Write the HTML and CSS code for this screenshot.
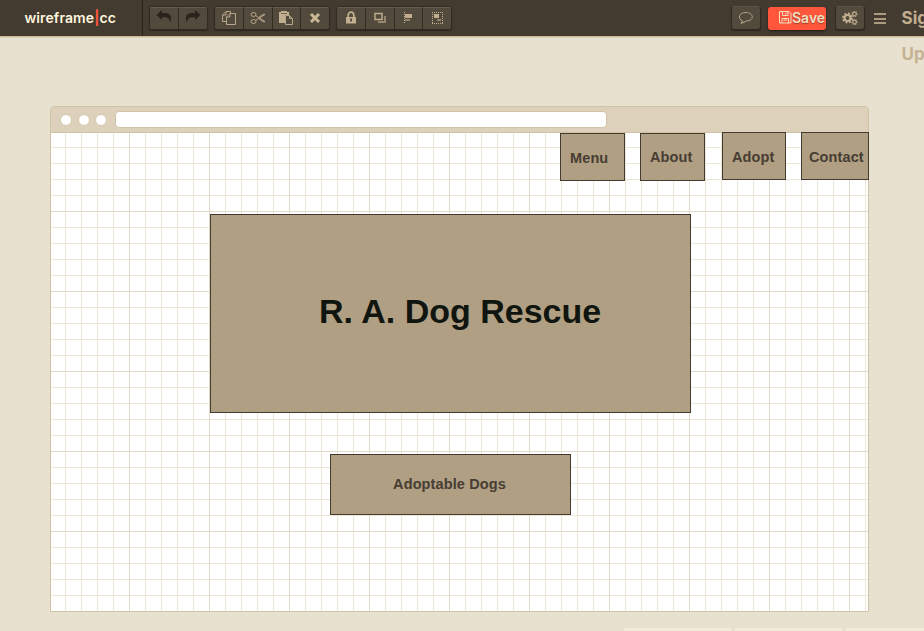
FILE: index.html
```html
<!DOCTYPE html>
<html lang="en">
<head>
<meta charset="utf-8">
<title>wireframe|cc</title>
<link rel="stylesheet" href="styles.css">
</head>
<body>
<header class="topbar">
  <div class="brand">wireframe<span class="brand-bar">|</span>cc</div>
  <div class="group history">
    <button class="btn" aria-label="Undo"><svg width="16" height="14" viewBox="0 0 16 14"><path class="dark" d="M.500 5 6 0v3h3.500c4.500 0 7 3.500 4.800 9.500C13.500 9 12 7.300 9 7.300H6V10z"/></svg></button>
    <button class="btn" aria-label="Redo"><svg width="16" height="14" viewBox="0 0 16 14"><path class="dark" d="M15.500 5 10 0v3H6.500c-4.500 0-7 3.500-4.800 9.500C2.500 9 4 7.300 7 7.300h3V10z"/></svg></button>
  </div>
  <div class="group edit">
    <button class="btn" aria-label="Copy"><svg width="16" height="16" viewBox="0 0 16 16"><path class="line" d="M5.500 11.500h-4V5L5 1.500h4.500V4M5 1.500V5H1.500M5.500 7 9 3.500h5.500v11h-9zM9 3.500V7H5.500"/></svg></button>
    <button class="btn" aria-label="Cut"><svg width="16" height="14" viewBox="0 0 16 14"><ellipse class="line" cx="3.500" cy="3.500" rx="2.500" ry="2"/><ellipse class="line" cx="3.500" cy="10.500" rx="2.500" ry="2"/><path class="line" d="m5.500 4.500 3 2L14 3l1 .500-9.500 6M8.500 7.500 14 11l1-.500-5.500-3.500"/></svg></button>
    <button class="btn" aria-label="Paste"><svg width="16" height="16" viewBox="0 0 16 16"><path class="fill" d="M1 2h2V1h6v1h2v3H7v8H1z"/><path class="dark-line" d="M3 3.500h6"/><path class="line" d="M7.500 5.500h4l3 3v6h-7zM11.500 5.500v3h3"/></svg></button>
    <button class="btn" aria-label="Delete"><svg width="12" height="12" viewBox="0 0 12 12"><path class="cross" d="m2 2 8 8m0-8-8 8"/></svg></button>
  </div>
  <div class="group arrange">
    <button class="btn" aria-label="Lock"><svg width="12" height="14" viewBox="0 0 12 14"><path class="lock" d="M3.200 7V4a2.800 2.800 0 0 1 5.600 0v3"/><path class="fill" d="M1 6h10v6.500H1z"/><path class="dark" d="M5.400 7.500h1.300v3H5.400z"/></svg></button>
    <button class="btn" aria-label="Bring forward"><svg width="12" height="12" viewBox="0 0 12 12"><path class="fill dim" d="M10 4h2v7H4V9h6z"/><path class="line strong" d="M1 1.500h7v6H1z"/></svg></button>
    <button class="btn" aria-label="Align"><svg width="10" height="12" viewBox="0 0 10 12"><path class="dots" d="M1.500 0v12"/><path class="fill" d="M2 2h7v4H2z"/><path class="fill dim" d="M2 7h5v2H2z"/></svg></button>
    <button class="btn" aria-label="Group"><svg width="12" height="12" viewBox="0 0 12 12"><path class="dots" d="M1 .500h11M1 11.500h11M1.500 0v12M11.500 0v12"/><path class="fill" d="M3 2h5v4H3z"/><path class="fill dim" d="M6 7h4v2H6z"/></svg></button>
  </div>
  <div class="actions">
    <button class="tool" aria-label="Comment"><svg width="16" height="14" viewBox="0 0 16 14"><path class="line" d="M4.500 10C-.500 7.500.500 1.500 8 1.500s9 8 .500 8.500L3 12.500z"/></svg></button>
    <button class="save"><svg width="13" height="13" viewBox="0 0 13 13"><path d="M.500.500h9.500l2 2v9.500H.500zM3.500.500v4h5.500v-4M3 12V7.500h6.500V12M7 1.500v2M4.500 9h3.500"/></svg><span>Save</span></button>
    <button class="tool" aria-label="Settings"><svg width="16" height="14" viewBox="0 0 16 14"><circle class="gear-teeth" cx="5.500" cy="7" r="4.500"/><circle class="gear" cx="5.500" cy="7" r="3"/><circle class="small-teeth" cx="12.500" cy="3" r="2.400"/><circle class="small-gear" cx="12.500" cy="3" r="1.800"/><circle class="small-teeth" cx="12.500" cy="11" r="2.400"/><circle class="small-gear" cx="12.500" cy="11" r="1.800"/></svg></button>
    <div class="burger"><i></i><i></i><i></i></div>
    <a class="signup"><span>Sign</span><span class="up">Up</span></a>
  </div>
</header>
<main class="browser">
  <div class="chrome"><i></i><i></i><i></i><div class="address"></div></div>
  <div class="canvas">
    <div class="box menu">Menu</div>
    <div class="box about">About</div>
    <div class="box adopt">Adopt</div>
    <div class="box contact">Contact</div>
    <div class="box hero">R. A. Dog Rescue</div>
    <div class="box dogs">Adoptable Dogs</div>
  </div>
</main>
<footer class="tabs"><i></i><i></i><i></i></footer>
</body>
</html>
```
FILE: styles.css
```css
* { box-sizing: border-box; }
body {
  margin: 0;
  width: 924px;
  height: 631px;
  overflow: hidden;
  display: flex;
  flex-direction: column;
  background: #e9e1cf;
  font-family: Inter, "Liberation Sans", sans-serif;
}
button { margin: 0; padding: 0; border: 0; font: inherit; }
svg { display: block; overflow: visible; }
.topbar {
  display: flex;
  align-items: flex-start;
  flex: none;
  height: 37px;
  background: #433a30;
  border-bottom: 1px solid #c9b99b;
  box-shadow: 0 1px 0 #ded2b8;
}
.brand {
  flex: none;
  width: 143px;
  height: 36px;
  padding-left: 24.500px;
  border-right: 1px solid #29231c;
  color: #fff5df;
  font-size: 14px;
  font-weight: 600;
  letter-spacing: .1px;
  line-height: 36px;
  white-space: nowrap;
}
.brand-bar { color: #ff563c; font-weight: 700; }
.group {
  display: flex;
  flex: none;
  height: 24px;
  margin-top: 6px;
  border: 1px solid #302a22;
  border-radius: 3px;
  background: #524a3c;
  box-shadow: 0 1px 1px #2e271f;
  overflow: hidden;
}
.history { width: 59px; margin-left: 6px; }
.edit { width: 116px; margin-left: 6px; }
.arrange { width: 116px; margin-left: 6px; }
.btn {
  flex: 1;
  display: flex;
  align-items: center;
  justify-content: center;
  padding-bottom: 2px;
  background: #524a3c;
  border-top: 1px solid #675e4e;
}
.history .btn { padding-bottom: 3px; }
.btn + .btn { border-left: 1px solid #302a22; }
.fill { fill: #c1af90; }
.dim { fill: #94866c; }
.line { fill: none; stroke: #b7a588; stroke-width: 1; }
.strong { stroke: #c1af90; stroke-width: 1.400; }
.dark { fill: #29231c; }
.dark-line { stroke: #74684f; }
.cross { stroke: #cbb996; stroke-width: 3; }
.lock { fill: none; stroke: #c1af90; stroke-width: 1.700; }
.dots { fill: none; stroke: #c1af90; stroke-dasharray: 1 1; }
.actions { display: flex; flex: none; margin-left: auto; width: 193px; height: 36px; }
.tool {
  display: flex;
  flex: none;
  align-items: center;
  justify-content: center;
  width: 30px;
  height: 24px;
  margin-top: 6px;
  padding-bottom: 1px;
  border: 1px solid #302a22;
  border-top-color: #5b5244;
  border-radius: 3px;
  background: #524a3c;
  box-shadow: 0 1px 1px #2e271f;
}
.save {
  display: flex;
  flex: none;
  align-items: center;
  width: 58px;
  height: 23px;
  margin: 7px 9px 0 7px;
  padding: 0 0 2px 11px;
  border-radius: 3px;
  background: #ff563c;
  box-shadow: 0 1px 2px #211a14;
  color: #f2dfc1;
  font-size: 14px;
  font-weight: 600;
  text-shadow: 0 1px 1px #a33c29;
}
.save svg { flex: none; fill: none; stroke: #f2dfc1; }
.gear { fill: none; stroke: #c1af90; stroke-width: 2.200; }
.gear-teeth { fill: none; stroke: #c1af90; stroke-width: 2; stroke-dasharray: 1.800 1.734; }
.small-gear { fill: none; stroke: #b7a588; stroke-width: 1.200; }
.small-teeth { fill: none; stroke: #b7a588; stroke-width: 1.400; stroke-dasharray: 1 .885; }
.burger { display: flex; flex: none; flex-direction: column; gap: 2.500px; width: 12px; margin: 13px 0 0 9px; }
.burger i { height: 2px; background: #ab9b7e; }
.signup { display: flex; flex: none; flex-direction: column; margin-left: 15.500px; color: #c1af90; font-size: 17px; font-weight: 700; line-height: 36px; }
.signup .up { color: #c4b393; }
.browser {
  flex: none;
  width: 819px;
  height: 506px;
  margin: 69px 0 0 50px;
  border: 1px solid #cfc3a5;
  border-radius: 4px 4px 0 0;
}
.chrome {
  display: flex;
  align-items: center;
  height: 26px;
  padding-left: 9px;
  border-bottom: 1px solid #cfc3a5;
  background: #ddd1bb;
  border-radius: 3px 3px 0 0;
}
.chrome i { width: 12px; height: 12px; margin-right: 5.700px; border: 1px solid #d3c7ab; border-radius: 50%; background: #fff; }
.address { width: 492px; height: 17px; margin-left: 2px; border: 1px solid #d0c4a8; border-radius: 4px; background: #fff; }
.canvas {
  position: relative;
  height: 478px;
  background-color: #fff;
  background-image:
    linear-gradient(90deg, #dfdac9 1px, transparent 1px),
    linear-gradient(#dfdac9 1px, transparent 1px),
    linear-gradient(90deg, #ede7d8 1px, transparent 1px),
    linear-gradient(#ede7d8 1px, transparent 1px);
  background-size: 80px 80px, 80px 80px, 16px 16px, 16px 16px;
  background-position: 78px 0, 0 78px, 14px 0, 0 14px;
}
/* Elements placed freely on the drawing canvas. */
.box {
  position: absolute;
  border: 1px solid #433a30;
  background: #b09f82;
  color: #473d33;
  font: bold 14.500px/46px "Liberation Sans", sans-serif;
  letter-spacing: .12px;
  white-space: nowrap;
}
.menu { left: 509px; top: 0; width: 65px; height: 48px; padding-left: 9px; line-height: 48px; }
.about { left: 589px; top: 0; width: 65px; height: 48px; padding-left: 9px; }
.adopt { left: 671px; top: -1px; width: 64px; height: 48px; padding-left: 9px; line-height: 48px; }
.contact { left: 750px; top: -1px; width: 68px; height: 48px; padding-left: 7px; line-height: 48px; }
.hero { left: 159px; top: 81px; width: 481px; height: 199px; padding-left: 108px; color: #11150f; font-size: 34px; line-height: 193px; letter-spacing: 0; }
.dogs { left: 279px; top: 321px; width: 241px; height: 61px; padding-right: 2px; text-align: center; line-height: 58px; }
.tabs { display: flex; flex: none; gap: 4px; height: 3px; margin: 16px 0 0 624px; }
.tabs i { flex: none; width: 107px; background: #f3ecd8; }
```
